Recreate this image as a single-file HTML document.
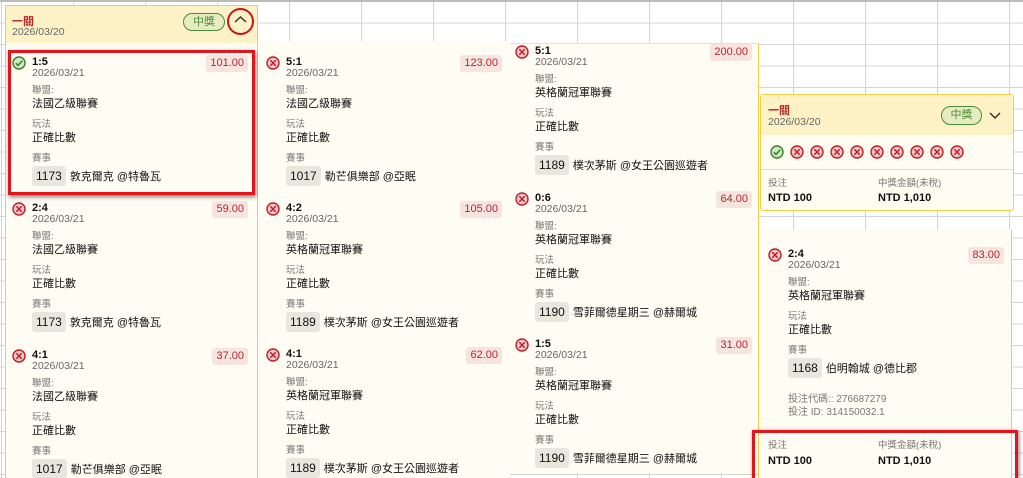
<!DOCTYPE html>
<html style="width:1023px;height:478px;overflow:hidden"><head><meta charset="utf-8"><style>
*{margin:0;padding:0;box-sizing:border-box}
body{width:1023px;height:478px;overflow:hidden;position:relative;font-family:"Liberation Sans","Noto Sans CJK TC",sans-serif;color:#111;
background-color:#fff;
background-image:linear-gradient(#d4d4d4 1px,transparent 1px),linear-gradient(90deg,#d4d4d4 1px,transparent 1px);
background-size:72px 21.5px;background-position:1px 1px,1px 0}
.a{position:absolute;white-space:nowrap}
.col{position:absolute;background:#fffcf3}
.t{font-size:11px;font-weight:bold;line-height:12px}
.d{font-size:10.5px;color:#666;line-height:12px}
.l{font-size:9.5px;color:#777;line-height:12px}
.v{font-size:11px;color:#111;line-height:13px}
.chip{background:#e9e6de;border-radius:3px;padding:0 4px;font-size:12px;line-height:20px;display:inline-block;margin-right:4px}
.odds{background:#f7e4df;color:#b02a35;font-size:11px;line-height:17px;padding:0 4px;border-radius:3px}
.pill{border:1px solid #4f8a3a;background:#e5edc0;color:#4f8a3a;border-radius:10px;font-size:11px;text-align:center;line-height:16px}
.big{font-size:11px;font-weight:bold}
</style></head><body>
<div style="position:absolute;left:0;top:0;width:1023px;height:2px;background:#bbb"></div>

<div class="col" style="left:5px;top:5px;width:253px;height:473px;border:1px solid #f2cf45;border-bottom:none"></div>
<div class="a" style="left:6px;top:6px;width:251px;height:37px;background:#fdf1c6"></div>
<div class="a" style="left:12px;top:13px;color:#b8282e;font-size:11px;font-weight:bold">一關</div>
<div class="a d" style="left:12px;top:26px">2026/03/20</div>
<div class="a pill" style="left:183px;top:13px;width:42px;height:18px">中獎</div>
<div class="a" style="left:227px;top:8px;width:27px;height:27px;border:2.5px solid #c4141c;border-radius:50%;background:#fdf1c6"></div>
<svg class="a" style="left:233px;top:15px" width="15" height="10"><path d="M2 7 L7.5 2 L13 7" stroke="#333" stroke-width="1.5" fill="none"/></svg>
<div class="a" style="left:8px;top:50px;width:247px;height:145px;border:3px solid #e4141a;box-shadow:1px 2px 4px rgba(0,0,0,.5)"></div>

<div class="col" style="left:258px;top:41px;width:252px;height:437px"></div>
<div class="col" style="left:510px;top:43px;width:249px;height:430px;border-right:1px solid #f2cf45;border-top:1px solid #e0e0e0"></div>

<div class="a" style="left:760px;top:94px;width:254px;height:117px;border:1px solid #f2cf45;border-radius:3px;background:#fffcf1"></div>
<div class="a" style="left:761px;top:95px;width:252px;height:40px;background:#fdf1c6"></div>
<div class="a" style="left:768px;top:102px;color:#b8282e;font-size:11px;font-weight:bold">一關</div>
<div class="a d" style="left:768px;top:116px">2026/03/20</div>
<div class="a pill" style="left:941px;top:106px;width:41px;height:19px">中獎</div>
<svg class="a" style="left:988px;top:111px" width="14" height="9"><path d="M2 2 L7 7 L12 2" stroke="#333" stroke-width="1.5" fill="none"/></svg>
<div class="a" style="left:761px;top:169px;width:252px;height:1px;background:#e6e0cc"></div>
<div class="a l" style="left:768px;top:178px">投注</div>
<div class="a big" style="left:768px;top:192px">NTD 100</div>
<div class="a l" style="left:878px;top:178px">中獎金額(未稅)</div>
<div class="a big" style="left:878px;top:192px">NTD 1,010</div>

<div class="col" style="left:758px;top:230px;width:254px;height:248px;border-left:1px solid #f2cf45;border-right:1px solid #f2cf45"></div>
<div class="a l" style="left:788px;top:394px;font-size:10px">投注代碼:: 276687279</div>
<div class="a l" style="left:788px;top:407px;font-size:10px">投注 ID: 314150032.1</div>
<div class="a" style="left:752px;top:430px;width:266px;height:48px;border:3px solid #e4141a;border-bottom:none;box-shadow:1px 1px 4px rgba(0,0,0,.5)"></div>
<div class="a l" style="left:768px;top:440px">投注</div>
<div class="a big" style="left:768px;top:455px">NTD 100</div>
<div class="a l" style="left:878px;top:440px">中獎金額(未稅)</div>
<div class="a big" style="left:878px;top:455px">NTD 1,010</div>

<svg width="0" height="0" style="position:absolute">
<defs>
<symbol id="x" viewBox="0 0 14 14"><circle cx="7" cy="7" r="6" fill="#f3c4c4" stroke="#b81f2a" stroke-width="1.4"/><path d="M4.3 4.3L9.7 9.7M9.7 4.3L4.3 9.7" stroke="#b81f2a" stroke-width="1.4"/></symbol>
<symbol id="ok" viewBox="0 0 14 14"><circle cx="7" cy="7" r="6" fill="#cfe8c6" stroke="#3d7d2e" stroke-width="1.4"/><path d="M3.8 7.2L6 9.4L10.3 4.8" stroke="#3d7d2e" stroke-width="1.5" fill="none"/></symbol>
</defs></svg>

<div id="items"></div>
<script>
var items=[
[12,62,248,'ok','1:5','101.00','法國乙級聯賽','1173','敦克爾克 @特魯瓦'],
[12,208,248,'x','2:4','59.00','法國乙級聯賽','1173','敦克爾克 @特魯瓦'],
[12,355,248,'x','4:1','37.00','法國乙級聯賽','1017','勒芒俱樂部 @亞眠'],
[266,62,502,'x','5:1','123.00','法國乙級聯賽','1017','勒芒俱樂部 @亞眠'],
[266,208,502,'x','4:2','105.00','英格蘭冠軍聯賽','1189','樸次茅斯 @女王公園巡遊者'],
[266,354,502,'x','4:1','62.00','英格蘭冠軍聯賽','1189','樸次茅斯 @女王公園巡遊者'],
[515,51,752,'x','5:1','200.00','英格蘭冠軍聯賽','1189','樸次茅斯 @女王公園巡遊者'],
[515,198,752,'x','0:6','64.00','英格蘭冠軍聯賽','1190','雪菲爾德星期三 @赫爾城'],
[515,344,752,'x','1:5','31.00','英格蘭冠軍聯賽','1190','雪菲爾德星期三 @赫爾城'],
[768,254,1004,'x','2:4','83.00','英格蘭冠軍聯賽','1168','伯明翰城 @德比郡']
];
var h='';
items.forEach(function(i){
var x=i[0],c=i[1],tx=x+20;
h+='<svg class="a" style="left:'+x+'px;top:'+(c-6)+'px" width="14" height="14"><use href="#'+i[3]+'"/></svg>';
h+='<div class="a t" style="left:'+tx+'px;top:'+(c-6)+'px">'+i[4]+'</div>';
h+='<div class="a d" style="left:'+tx+'px;top:'+(c+5)+'px">2026/03/21</div>';
h+='<div class="a odds" style="right:'+(1023-i[2])+'px;top:'+(c-7)+'px">'+i[5]+'</div>';
h+='<div class="a l" style="left:'+tx+'px;top:'+(c+23)+'px">聯盟:</div>';
h+='<div class="a v" style="left:'+tx+'px;top:'+(c+36)+'px">'+i[6]+'</div>';
h+='<div class="a l" style="left:'+tx+'px;top:'+(c+57)+'px">玩法</div>';
h+='<div class="a v" style="left:'+tx+'px;top:'+(c+70)+'px">正確比數</div>';
h+='<div class="a l" style="left:'+tx+'px;top:'+(c+91)+'px">賽事</div>';
h+='<div class="a v" style="left:'+tx+'px;top:'+(c+104)+'px;line-height:20px"><span class="chip">'+i[7]+'</span>'+i[8]+'</div>';
});
for(var k=0;k<10;k++){h+='<svg class="a" style="left:'+(770+k*20)+'px;top:145px" width="14" height="14"><use href="#'+(k==0?'ok':'x')+'"/></svg>';}
document.getElementById('items').innerHTML=h;
</script>
</body></html>
